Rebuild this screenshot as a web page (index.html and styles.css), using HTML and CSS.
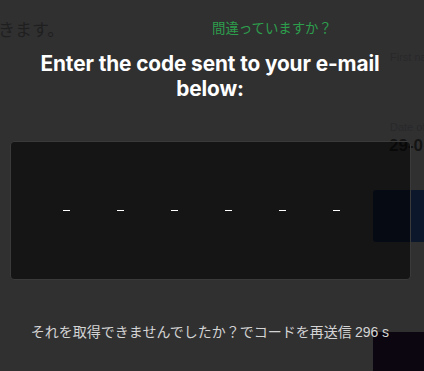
FILE: index.html
```html
<!DOCTYPE html>
<html lang="ja">
<head>
<meta charset="utf-8">
<link rel="stylesheet" href="styles.css">
</head>
<body>
<div class="page">
  <div class="behind">
    <p class="bg-text">きます。</p>
    <span class="bg-label bg-first">First name</span>
    <span class="bg-label bg-date">Date of birth</span>
    <span class="bg-value">29-0</span>
    <div class="bg-button"></div>
    <div class="bg-purple"></div>
  </div>
  <div class="modal">
    <div class="link-row"><a class="wrong-link">間違っていますか？</a></div>
    <h1 class="title">Enter the code sent to your e-mail below:</h1>
    <div class="code-box">
      <div class="digits">
        <span class="digit"></span>
        <span class="digit"></span>
        <span class="digit"></span>
        <span class="digit"></span>
        <span class="digit"></span>
        <span class="digit"></span>
      </div>
    </div>
    <p class="resend">それを取得できませんでしたか？でコードを再送信 <span class="count">296 s</span></p>
  </div>
</div>
</body>
</html>
```
FILE: styles.css
```css
html, body {
  margin: 0;
  padding: 0;
  background: #303031;
  width: 424px;
  height: 371px;
  overflow: hidden;
}
.page {
  position: relative;
  width: 424px;
  height: 371px;
  overflow: hidden;
  font-family: "Liberation Sans", "Noto Sans CJK JP", sans-serif;
}
.behind {
  position: absolute;
  inset: 0;
}
.bg-text {
  position: absolute;
  left: -2px;
  top: 16px;
  margin: 0;
  font-size: 17px;
  color: #1f1f20;
  font-family: "Noto Sans CJK JP", sans-serif;
}
.bg-label {
  position: absolute;
  left: 390px;
  font-size: 11px;
  color: #28282a;
  white-space: nowrap;
}
.bg-first { top: 51px; }
.bg-date { top: 121px; }
.bg-value {
  position: absolute;
  left: 389px;
  top: 136px;
  font-size: 17px;
  font-weight: bold;
  color: #141414;
}
.bg-button {
  position: absolute;
  left: 373px;
  top: 190px;
  width: 60px;
  height: 52px;
  background: #0d172c;
  border-radius: 3px;
}
.bg-purple {
  position: absolute;
  left: 373px;
  top: 332px;
  width: 60px;
  height: 60px;
  background: #0b0610;
}
.modal {
  position: relative;
  display: flex;
  flex-direction: column;
  align-items: center;
  padding: 0 14px 0 10px;
  width: 400px;
}
.link-row {
  align-self: stretch;
  display: flex;
  padding-left: 202px;
  padding-top: 19px;
}
.wrong-link {
  font-family: "Noto Sans CJK JP", sans-serif;
  font-size: 13.4px;
  line-height: 16px;
  color: #2d9f4c;
}
.title {
  margin: 16px 0 0;
  font-family: Inter, "Liberation Sans", sans-serif;
  font-size: 20.8px;
  line-height: 25px;
  font-weight: 700;
  letter-spacing: -0.1px;
  color: #ffffff;
  text-align: center;
  width: 380px;
}
.code-box {
  margin-top: 40px;
  width: 401px;
  height: 139px;
  box-sizing: border-box;
  border: 1px solid #3a3a3b;
  border-radius: 4px;
  background: rgba(0, 0, 0, 0.55);
  display: flex;
  align-items: center;
}
.digits {
  display: flex;
  padding-left: 41px;
  gap: 24px;
}
.digit {
  width: 30px;
  height: 2px;
  display: flex;
  justify-content: center;
}
.digit::before {
  content: "";
  width: 7px;
  height: 1px;
  background: #ffffff;
}
.resend {
  margin: 41px 0 0;
  font-family: "Noto Sans CJK JP", sans-serif;
  font-size: 14px;
  color: #d4d4d4;
  white-space: nowrap;
}
.count {
  font-family: "Liberation Sans", sans-serif;
}
```
